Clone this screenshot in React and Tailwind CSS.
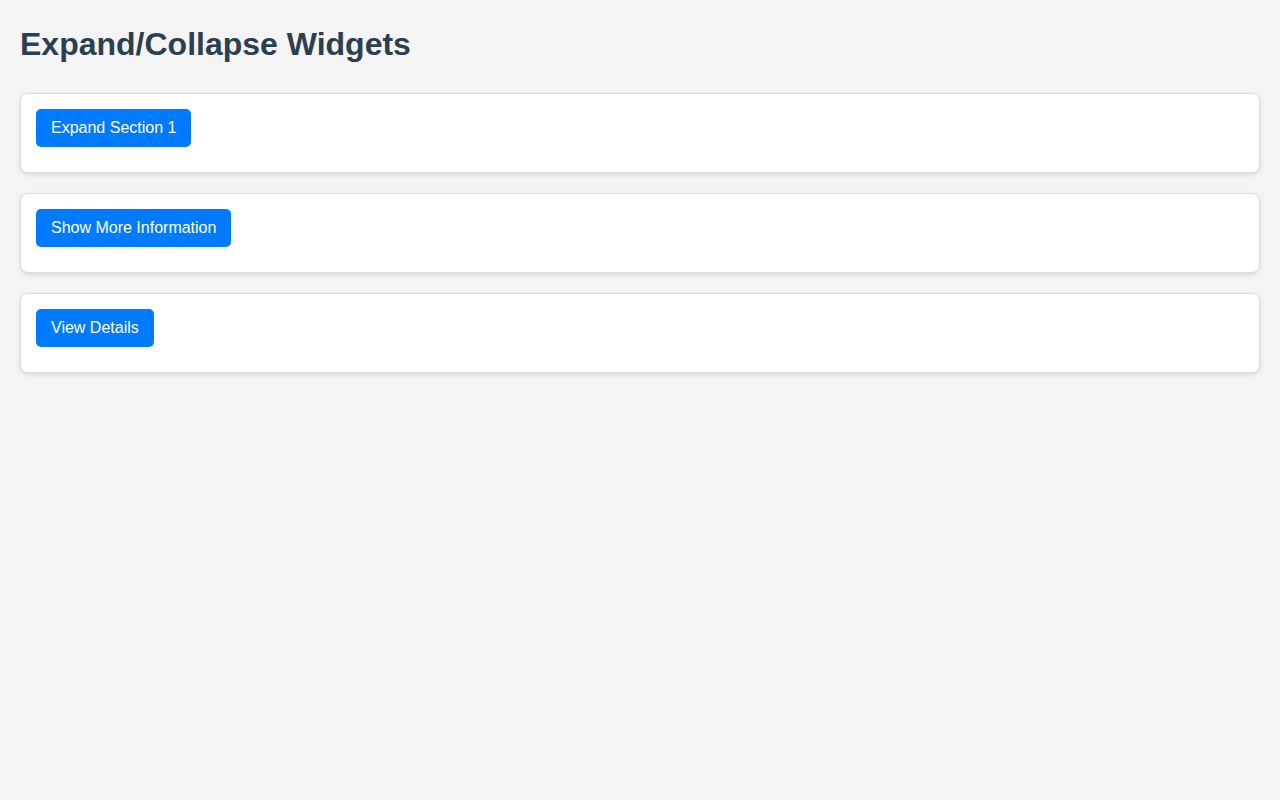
export default function App() {
  const items = ["Expand Section 1", "Show More Information", "View Details"];
  return (
    <div className="min-h-screen bg-[#f4f4f4] p-5" style={{ fontFamily: '"Liberation Sans", Arial, sans-serif' }}>
      <h1 className="mt-[6px] mb-[30px] text-[32px] font-bold leading-[37px] text-[#2c3e50]">Expand/Collapse Widgets</h1>
      <div className="flex flex-col gap-5">
        {items.map((t) => (
          <div key={t} className="rounded-lg border border-[#ddd] bg-white p-[15px] shadow-[0_2px_5px_rgba(0,0,0,0.1)]">
            <button className="mb-[10px] block rounded-[5px] bg-[#007bff] px-[15px] py-[10px] text-base leading-[18px] text-white">{t}</button>
          </div>
        ))}
      </div>
    </div>
  );
}
